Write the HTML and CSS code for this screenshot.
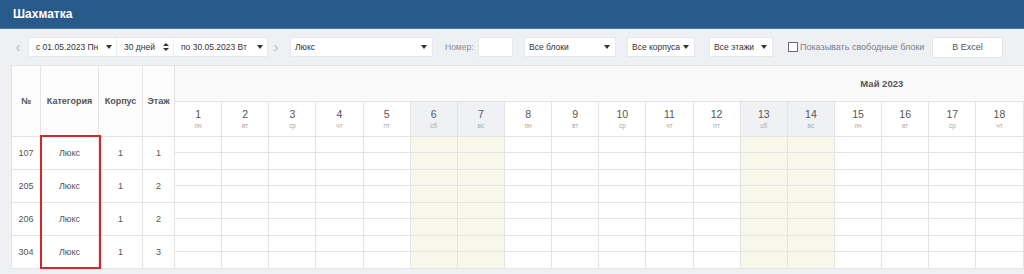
FILE: index.html
```html
<!DOCTYPE html>
<html lang="ru">
<head>
    <meta charset="UTF-8">
    <meta name="viewport" content="width=device-width, initial-scale=1.0">
    <title>Шахматка</title>
    <link rel="stylesheet" href="styles.css">
</head>
<body>
    <!-- Title bar -->
    <div class="topbar">
        <h1>Шахматка</h1>
    </div>

    <!-- Filters -->
    <div class="toolbar">
        <span class="nav-arrow">&lsaquo;</span>
        <div class="date-group">
            <div class="select date-from"><span>с 01.05.2023 Пн</span><span class="caret"></span></div>
            <div class="select period"><span>30 дней</span><span class="spin"><i class="up"></i><i class="down"></i></span></div>
            <div class="select date-to"><span>по 30.05.2023 Вт</span><span class="caret"></span></div>
        </div>
        <span class="nav-arrow next">&rsaquo;</span>
        <div class="select category"><span>Люкс</span><span class="caret"></span></div>
        <label class="num-label" for="roomNum">Номер:</label>
        <input class="num-input" type="text" id="roomNum">
        <div class="select blocks"><span>Все блоки</span><span class="caret"></span></div>
        <div class="select corps"><span>Все корпуса</span><span class="caret"></span></div>
        <div class="select floors"><span>Все этажи</span><span class="caret"></span></div>
        <label class="free-check"><span class="box"></span><span class="free-text">Показывать свободные блоки</span></label>
        <button class="excel-btn">В Excel</button>
    </div>

    <!-- Chess board -->
    <div class="board">
        <div class="grid-wrap">
            <table class="chess">
                <colgroup id="cols">
                    <col class="c-num">
                    <col class="c-cat">
                    <col class="c-corp">
                    <col class="c-floor">
                </colgroup>
                <thead>
                    <tr class="month-row">
                        <th rowspan="2" class="head-left">№</th>
                        <th rowspan="2" class="head-left">Категория</th>
                        <th rowspan="2" class="head-left">Корпус</th>
                        <th rowspan="2" class="head-left">Этаж</th>
                        <th class="month" id="month">Май 2023</th>
                    </tr>
                    <tr class="days-row" id="days"></tr>
                </thead>
                <tbody id="rooms"></tbody>
            </table>
        </div>
        <div class="mark"></div>
    </div>

    <script>
        const weekdays = ['пн', 'вт', 'ср', 'чт', 'пт', 'сб', 'вс'];
        const dayCount = 30;

        const rooms = [
            { num: 107, cat: 'Люкс', corp: 1, floor: 1 },
            { num: 205, cat: 'Люкс', corp: 1, floor: 2 },
            { num: 206, cat: 'Люкс', corp: 1, floor: 2 },
            { num: 304, cat: 'Люкс', corp: 1, floor: 3 }
        ];

        const cols = document.getElementById('cols');
        const daysRow = document.getElementById('days');
        const roomsBody = document.getElementById('rooms');

        document.getElementById('month').colSpan = dayCount;

        // 1 May 2023 is a Monday
        function isWeekend(day) {
            return (day - 1) % 7 >= 5;
        }

        function dayCells() {
            let html = '';
            for (let d = 1; d <= dayCount; d++) {
                html += `<td class="day${isWeekend(d) ? ' weekend' : ''}"></td>`;
            }
            return html;
        }

        for (let d = 1; d <= dayCount; d++) {
            const col = document.createElement('col');
            col.className = 'c-day';
            cols.appendChild(col);

            const th = document.createElement('th');
            th.className = 'day-head' + (isWeekend(d) ? ' weekend' : '');
            th.innerHTML = `<span class="d-num">${d}</span><span class="d-name">${weekdays[(d - 1) % 7]}</span>`;
            daysRow.appendChild(th);
        }

        // each room takes two half rows
        rooms.forEach(room => {
            const top = document.createElement('tr');
            top.className = 'half-top';
            top.innerHTML = `
                <td rowspan="2" class="info">${room.num}</td>
                <td rowspan="2" class="info">${room.cat}</td>
                <td rowspan="2" class="info">${room.corp}</td>
                <td rowspan="2" class="info">${room.floor}</td>
                ${dayCells()}
            `;
            const bottom = document.createElement('tr');
            bottom.className = 'half-bottom';
            bottom.innerHTML = dayCells();

            roomsBody.appendChild(top);
            roomsBody.appendChild(bottom);
        });
    </script>
</body>
</html>
```

FILE: styles.css
```css
* {
    box-sizing: border-box;
}

body {
    margin: 0;
    background-color: #eef0f3;
    font-family: "Liberation Sans", Arial, sans-serif;
    font-size: 9px;
    color: #555;
}

/* Title bar */
.topbar {
    height: 29px;
    background-color: #285a8b;
    border-bottom: 1px solid #4d75a0;
    padding-left: 13px;
    display: flex;
    align-items: center;
}

.topbar h1 {
    margin: 0;
    font-size: 12px;
    font-weight: bold;
    color: #fff;
}

/* Filters */
.toolbar {
    height: 36px;
    display: flex;
    align-items: center;
    padding-left: 12px;
    font-size: 8.5px;
}

.nav-arrow {
    width: 12px;
    margin-right: 4px;
    text-align: center;
    font-size: 15px;
    line-height: 20px;
    color: #b8bec8;
}

.nav-arrow.next {
    width: 16px;
    margin: 0 6px 0 0;
}

.date-group {
    display: flex;
}

.select {
    height: 20px;
    display: flex;
    align-items: center;
    justify-content: space-between;
    padding: 0 5px 0 4px;
    background-color: #fff;
    border: 1px solid #e6e8ec;
    color: #333;
    white-space: nowrap;
    overflow: hidden;
}

.date-group .select {
    padding-left: 7px;
    padding-right: 4px;
}

.date-group .select + .select {
    border-left: 1px solid #eceef1;
    margin-left: -1px;
}

.date-from { width: 89px; }
.period { width: 58px; }
.date-to { width: 95px; }
.category { width: 143px; }
.blocks { width: 92px; margin-left: 11px; }
.corps { width: 68px; margin-left: 11px; }
.floors { width: 64px; margin-left: 14px; }

.caret {
    flex-shrink: 0;
    width: 0;
    height: 0;
    border-left: 3px solid transparent;
    border-right: 3px solid transparent;
    border-top: 4px solid #333;
}

.spin {
    flex-shrink: 0;
    display: flex;
    flex-direction: column;
    gap: 2px;
}

.spin i {
    width: 0;
    height: 0;
    border-left: 3px solid transparent;
    border-right: 3px solid transparent;
}

.spin .up {
    border-bottom: 3px solid #333;
}

.spin .down {
    border-top: 3px solid #333;
}

.num-label {
    width: 27px;
    margin-left: 12px;
    color: #8a8f96;
    white-space: nowrap;
}

.num-input {
    width: 35px;
    height: 20px;
    margin: 0 0 0 6px;
    border: 1px solid #e6e8ec;
    background-color: #fff;
    padding: 0 3px;
    font-size: 9px;
}

.free-check {
    display: flex;
    align-items: center;
    margin-left: 15px;
    color: #7a7f86;
    font-size: 9px;
}

.free-check .box {
    width: 10px;
    height: 10px;
    border: 1px solid #6d6d6d;
    background-color: #fff;
    margin-right: 2px;
}

.free-text {
    width: 132px;
    white-space: nowrap;
}

.excel-btn {
    width: 71px;
    height: 21px;
    background-color: #fff;
    border: 1px solid #e3e5e9;
    border-radius: 2px;
    font-family: inherit;
    font-size: 9px;
    color: #555;
    padding: 0;
}

/* Chess board */
.board {
    position: relative;
    margin-left: 11px;
}

.grid-wrap {
    overflow: hidden;
}

.chess {
    border-collapse: collapse;
    table-layout: fixed;
    width: 1578px;
    background-color: #fff;
}

.c-num { width: 29px; }
.c-cat { width: 58px; }
.c-corp { width: 44px; }
.c-floor { width: 32px; }
.c-day { width: 47.15px; }

.chess th,
.chess td {
    border: 1px solid #e4e4e4;
    padding: 0;
    text-align: center;
}

.head-left {
    font-weight: bold;
    color: #555;
    background-color: #fdfdfd;
}

.month-row {
    height: 36px;
}

.month {
    background-color: #f9f9f9;
    font-size: 9.5px;
    font-weight: bold;
    color: #555;
}

.days-row {
    height: 35px;
}

.chess .day-head {
    height: 35px;
    font-weight: normal;
    vertical-align: middle;
    padding-top: 2px;
}

.day-head.weekend {
    background-color: #eff1f5;
}

.d-num {
    display: block;
    font-size: 10.5px;
    line-height: 12px;
    color: #555;
}

.d-name {
    display: block;
    font-size: 6.5px;
    line-height: 12px;
    color: #aaa;
}

.info {
    color: #555;
}

.half-top td.day {
    height: 16px;
}

.half-bottom td.day {
    height: 17px;
    border-top-color: #ececec;
}

.day.weekend {
    background-color: #f7f8e9;
}

/* highlight over category column */
.mark {
    position: absolute;
    left: 29px;
    top: 70px;
    width: 61px;
    height: 134px;
    border: 2px solid #d6262d;
}
```
